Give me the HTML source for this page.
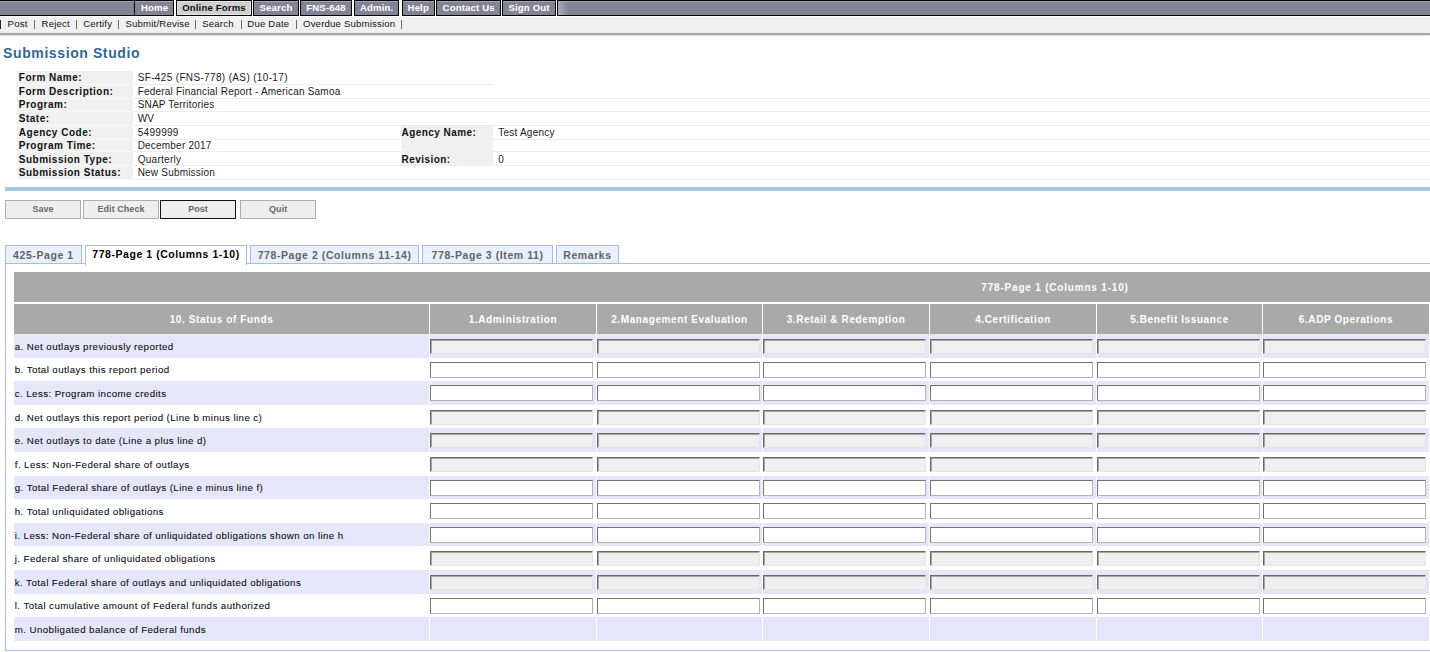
<!DOCTYPE html>
<html><head><meta charset="utf-8"><title>Submission Studio</title>
<style>
html,body{margin:0;padding:0;background:#fff;overflow:hidden;}
body{width:1430px;height:652px;position:relative;font-family:"Liberation Sans", sans-serif;}
#wrap{position:absolute;left:0;top:0;width:1430px;height:652px;overflow:hidden;}
.b{position:absolute;}
.t{position:absolute;white-space:nowrap;font-family:"Liberation Sans", sans-serif;}
.s{-webkit-text-stroke:0.07px currentColor;}
</style></head><body><div id="wrap">
<div class="b" style="left:0px;top:0px;width:1430px;height:16.5px;background:#fff;"></div>
<div class="b" style="left:0px;top:0px;width:134.8px;height:15.5px;background:#000;"></div>
<div class="b" style="left:0px;top:1px;width:133.8px;height:13.5px;background:#838396;box-shadow:inset 0 1px 0 #a7a4b6;"></div>
<div class="b" style="left:134.8px;top:0px;width:39.7px;height:15.5px;background:#000;"></div>
<div class="b" style="left:134.8px;top:1px;width:38.7px;height:13.5px;background:#838396;box-shadow:inset 0 1px 0 #a7a4b6;"></div>
<div class="t" style="left:124.80px;top:3.47px;width:59.70px;text-align:center;font-weight:bold;font-size:9.6px;line-height:9.6px;letter-spacing:0.15px;color:#fff;">Home</div>
<div class="b" style="left:176px;top:0px;width:76px;height:15.5px;background:#000;"></div>
<div class="b" style="left:177px;top:1px;width:74px;height:13.5px;background:#cfcfcf;box-shadow:inset 0 0 0 1px #e6e6e6;"></div>
<div class="t" style="left:166.00px;top:3.47px;width:96.00px;text-align:center;font-weight:bold;font-size:9.6px;line-height:9.6px;letter-spacing:0.15px;color:#111;">Online Forms</div>
<div class="b" style="left:253px;top:0px;width:46px;height:15.5px;background:#000;"></div>
<div class="b" style="left:254px;top:1px;width:44px;height:13.5px;background:#838396;box-shadow:inset 0 1px 0 #a7a4b6;"></div>
<div class="t" style="left:243.00px;top:3.47px;width:66.00px;text-align:center;font-weight:bold;font-size:9.6px;line-height:9.6px;letter-spacing:0.15px;color:#fff;">Search</div>
<div class="b" style="left:300px;top:0px;width:52px;height:15.5px;background:#000;"></div>
<div class="b" style="left:301px;top:1px;width:50px;height:13.5px;background:#838396;box-shadow:inset 0 1px 0 #a7a4b6;"></div>
<div class="t" style="left:290.00px;top:3.47px;width:72.00px;text-align:center;font-weight:bold;font-size:9.6px;line-height:9.6px;letter-spacing:0.15px;color:#fff;">FNS-648</div>
<div class="b" style="left:353.8px;top:0px;width:45.7px;height:15.5px;background:#000;"></div>
<div class="b" style="left:354.8px;top:1px;width:43.7px;height:13.5px;background:#838396;box-shadow:inset 0 1px 0 #a7a4b6;"></div>
<div class="t" style="left:343.80px;top:3.47px;width:65.70px;text-align:center;font-weight:bold;font-size:9.6px;line-height:9.6px;letter-spacing:0.15px;color:#fff;">Admin.</div>
<div class="b" style="left:401.5px;top:0px;width:33.5px;height:15.5px;background:#000;"></div>
<div class="b" style="left:402.5px;top:1px;width:31.5px;height:13.5px;background:#838396;box-shadow:inset 0 1px 0 #a7a4b6;"></div>
<div class="t" style="left:391.50px;top:3.47px;width:53.50px;text-align:center;font-weight:bold;font-size:9.6px;line-height:9.6px;letter-spacing:0.15px;color:#fff;">Help</div>
<div class="b" style="left:436.3px;top:0px;width:64.7px;height:15.5px;background:#000;"></div>
<div class="b" style="left:437.3px;top:1px;width:62.7px;height:13.5px;background:#838396;box-shadow:inset 0 1px 0 #a7a4b6;"></div>
<div class="t" style="left:426.30px;top:3.47px;width:84.70px;text-align:center;font-weight:bold;font-size:9.6px;line-height:9.6px;letter-spacing:0.15px;color:#fff;">Contact Us</div>
<div class="b" style="left:502.2px;top:0px;width:53.8px;height:15.5px;background:#000;"></div>
<div class="b" style="left:503.2px;top:1px;width:51.8px;height:13.5px;background:#838396;box-shadow:inset 0 1px 0 #a7a4b6;"></div>
<div class="t" style="left:492.20px;top:3.47px;width:73.80px;text-align:center;font-weight:bold;font-size:9.6px;line-height:9.6px;letter-spacing:0.15px;color:#fff;">Sign Out</div>
<div class="b" style="left:556.8px;top:0px;width:883.2px;height:15.5px;background:#000;"></div>
<div class="b" style="left:557.8px;top:1px;width:881.2px;height:13.5px;background:#838396;box-shadow:inset 0 1px 0 #a7a4b6;"></div>
<div class="b" style="left:557.8px;top:2px;width:11px;height:12.5px;background:linear-gradient(90deg,rgba(175,175,192,0.9),rgba(175,175,192,0));"></div>
<div class="b" style="left:0px;top:16.5px;width:1430px;height:16.5px;background:#f0f0f0;"></div>
<div class="b" style="left:0px;top:33px;width:1430px;height:2px;background:#a8a8a8;"></div>
<div class="b" style="left:0px;top:35px;width:1430px;height:1.5px;background:linear-gradient(#d8d8d8,#fff);"></div>
<div class="t" style="left:7.60px;top:19.17px;font-weight:normal;font-size:9.6px;line-height:9.6px;letter-spacing:0.18px;color:#111;">Post</div>
<div class="t" style="left:41.60px;top:19.17px;font-weight:normal;font-size:9.6px;line-height:9.6px;letter-spacing:0.18px;color:#111;">Reject</div>
<div class="t" style="left:83.20px;top:19.17px;font-weight:normal;font-size:9.6px;line-height:9.6px;letter-spacing:0.18px;color:#111;">Certify</div>
<div class="t" style="left:125.50px;top:19.17px;font-weight:normal;font-size:9.6px;line-height:9.6px;letter-spacing:0.18px;color:#111;">Submit/Revise</div>
<div class="t" style="left:202.20px;top:19.17px;font-weight:normal;font-size:9.6px;line-height:9.6px;letter-spacing:0.18px;color:#111;">Search</div>
<div class="t" style="left:247.30px;top:19.17px;font-weight:normal;font-size:9.6px;line-height:9.6px;letter-spacing:0.18px;color:#111;">Due Date</div>
<div class="t" style="left:303.00px;top:19.17px;font-weight:normal;font-size:9.6px;line-height:9.6px;letter-spacing:0.18px;color:#111;">Overdue Submission</div>
<div class="b" style="left:-0.3px;top:20px;width:1px;height:8.8px;background:#222;"></div>
<div class="b" style="left:33.6px;top:20px;width:1px;height:8.8px;background:#6a6a6a;"></div>
<div class="b" style="left:75.5px;top:20px;width:1px;height:8.8px;background:#6a6a6a;"></div>
<div class="b" style="left:118.2px;top:20px;width:1px;height:8.8px;background:#6a6a6a;"></div>
<div class="b" style="left:195.1px;top:20px;width:1px;height:8.8px;background:#6a6a6a;"></div>
<div class="b" style="left:240.5px;top:20px;width:1px;height:8.8px;background:#6a6a6a;"></div>
<div class="b" style="left:295.8px;top:20px;width:1px;height:8.8px;background:#6a6a6a;"></div>
<div class="b" style="left:400.5px;top:20px;width:1px;height:8.8px;background:#6a6a6a;"></div>
<div class="t" style="left:3.10px;top:46.15px;font-weight:bold;font-size:14px;line-height:14px;letter-spacing:0.6px;color:#336699;">Submission Studio</div>
<div class="b" style="left:17.3px;top:71.2px;width:115.7px;height:13.7px;background:#f0f0f0;"></div>
<div class="b" style="left:17.3px;top:83.9px;width:115.7px;height:1px;background:#f7f7f7;"></div>
<div class="b" style="left:134px;top:83.9px;width:360px;height:1px;background:#ebebeb;"></div>
<div class="t" style="left:18.80px;top:72.94px;font-weight:bold;font-size:10px;line-height:10px;letter-spacing:0.5px;color:#111;">Form Name:</div>
<div class="t" style="left:137.70px;top:72.94px;font-weight:normal;font-size:10px;line-height:10px;letter-spacing:0.35px;color:#1a1a1a;">SF-425 (FNS-778) (AS) (10-17)</div>
<div class="b" style="left:17.3px;top:84.9px;width:115.7px;height:14.1px;background:#f0f0f0;"></div>
<div class="b" style="left:17.3px;top:98px;width:115.7px;height:1px;background:#f7f7f7;"></div>
<div class="b" style="left:134px;top:98px;width:1300px;height:1px;background:#ebebeb;"></div>
<div class="t" style="left:18.80px;top:86.94px;font-weight:bold;font-size:10px;line-height:10px;letter-spacing:0.5px;color:#111;">Form Description:</div>
<div class="t" style="left:137.70px;top:86.94px;font-weight:normal;font-size:10px;line-height:10px;letter-spacing:0.2px;color:#1a1a1a;">Federal Financial Report - American Samoa</div>
<div class="b" style="left:17.3px;top:99px;width:115.7px;height:13.1px;background:#f0f0f0;"></div>
<div class="b" style="left:17.3px;top:111.1px;width:115.7px;height:1px;background:#f7f7f7;"></div>
<div class="b" style="left:134px;top:111.1px;width:1300px;height:1px;background:#ebebeb;"></div>
<div class="t" style="left:18.80px;top:100.33px;font-weight:bold;font-size:10px;line-height:10px;letter-spacing:0.5px;color:#111;">Program:</div>
<div class="t" style="left:137.70px;top:100.33px;font-weight:normal;font-size:10px;line-height:10px;letter-spacing:0.2px;color:#1a1a1a;">SNAP Territories</div>
<div class="b" style="left:17.3px;top:112.1px;width:115.7px;height:13.8px;background:#f0f0f0;"></div>
<div class="b" style="left:17.3px;top:124.9px;width:115.7px;height:1px;background:#f7f7f7;"></div>
<div class="b" style="left:134px;top:124.9px;width:1300px;height:1px;background:#ebebeb;"></div>
<div class="t" style="left:18.80px;top:113.83px;font-weight:bold;font-size:10px;line-height:10px;letter-spacing:0.5px;color:#111;">State:</div>
<div class="t" style="left:137.70px;top:113.83px;font-weight:normal;font-size:10px;line-height:10px;letter-spacing:0.2px;color:#1a1a1a;">WV</div>
<div class="b" style="left:17.3px;top:125.9px;width:115.7px;height:14px;background:#f0f0f0;"></div>
<div class="b" style="left:17.3px;top:138.9px;width:115.7px;height:1px;background:#f7f7f7;"></div>
<div class="b" style="left:134px;top:138.9px;width:1300px;height:1px;background:#ebebeb;"></div>
<div class="t" style="left:18.80px;top:127.94px;font-weight:bold;font-size:10px;line-height:10px;letter-spacing:0.5px;color:#111;">Agency Code:</div>
<div class="t" style="left:137.70px;top:127.94px;font-weight:normal;font-size:10px;line-height:10px;letter-spacing:0.3px;color:#1a1a1a;">5499999</div>
<div class="b" style="left:400.5px;top:125.9px;width:92.2px;height:14px;background:#f0f0f0;"></div>
<div class="t" style="left:401.50px;top:127.94px;font-weight:bold;font-size:10px;line-height:10px;letter-spacing:0.45px;color:#111;">Agency Name:</div>
<div class="t" style="left:498.30px;top:127.94px;font-weight:normal;font-size:10px;line-height:10px;letter-spacing:0.22px;color:#1a1a1a;">Test Agency</div>
<div class="b" style="left:17.3px;top:139.9px;width:115.7px;height:12.4px;background:#f0f0f0;"></div>
<div class="b" style="left:17.3px;top:151.3px;width:115.7px;height:1px;background:#f7f7f7;"></div>
<div class="b" style="left:134px;top:151.3px;width:1300px;height:1px;background:#ebebeb;"></div>
<div class="t" style="left:18.80px;top:141.23px;font-weight:bold;font-size:10px;line-height:10px;letter-spacing:0.5px;color:#111;">Program Time:</div>
<div class="t" style="left:137.70px;top:141.23px;font-weight:normal;font-size:10px;line-height:10px;letter-spacing:0.2px;color:#1a1a1a;">December 2017</div>
<div class="b" style="left:400.5px;top:139.9px;width:92.2px;height:12.4px;background:#f0f0f0;"></div>
<div class="b" style="left:17.3px;top:152.3px;width:115.7px;height:13.6px;background:#f0f0f0;"></div>
<div class="b" style="left:17.3px;top:164.9px;width:115.7px;height:1px;background:#f7f7f7;"></div>
<div class="b" style="left:134px;top:164.9px;width:1300px;height:1px;background:#ebebeb;"></div>
<div class="t" style="left:18.80px;top:154.94px;font-weight:bold;font-size:10px;line-height:10px;letter-spacing:0.5px;color:#111;">Submission Type:</div>
<div class="t" style="left:137.70px;top:154.94px;font-weight:normal;font-size:10px;line-height:10px;letter-spacing:0.28px;color:#1a1a1a;">Quarterly</div>
<div class="b" style="left:400.5px;top:152.3px;width:92.2px;height:13.6px;background:#f0f0f0;"></div>
<div class="t" style="left:401.50px;top:154.94px;font-weight:bold;font-size:10px;line-height:10px;letter-spacing:0.45px;color:#111;">Revision:</div>
<div class="t" style="left:498.30px;top:154.94px;font-weight:normal;font-size:10px;line-height:10px;letter-spacing:0.22px;color:#1a1a1a;">0</div>
<div class="b" style="left:17.3px;top:165.9px;width:115.7px;height:13.7px;background:#f0f0f0;"></div>
<div class="b" style="left:17.3px;top:178.6px;width:115.7px;height:1px;background:#f7f7f7;"></div>
<div class="b" style="left:134px;top:178.6px;width:1300px;height:1px;background:#ebebeb;"></div>
<div class="t" style="left:18.80px;top:168.44px;font-weight:bold;font-size:10px;line-height:10px;letter-spacing:0.5px;color:#111;">Submission Status:</div>
<div class="t" style="left:137.70px;top:168.44px;font-weight:normal;font-size:10px;line-height:10px;letter-spacing:0.2px;color:#1a1a1a;">New Submission</div>
<div class="b" style="left:5px;top:187px;width:1425px;height:4px;background:#a7c4e0;"></div>
<div class="b" style="left:5px;top:200.2px;width:76px;height:18.7px;background:#eeeeee;border:1px solid #adadad;box-sizing:border-box;"></div>
<div class="t" style="left:-17.00px;top:205.28px;width:120.00px;text-align:center;font-weight:bold;font-size:9px;line-height:9px;letter-spacing:0.05px;color:#666666;">Save</div>
<div class="b" style="left:83px;top:200.2px;width:76px;height:18.7px;background:#eeeeee;border:1px solid #adadad;box-sizing:border-box;"></div>
<div class="t" style="left:61.00px;top:205.28px;width:120.00px;text-align:center;font-weight:bold;font-size:9px;line-height:9px;letter-spacing:0.05px;color:#666666;">Edit Check</div>
<div class="b" style="left:160px;top:200.2px;width:76px;height:18.7px;background:#eeeeee;border:1px solid #111;box-sizing:border-box;"></div>
<div class="t" style="left:138.00px;top:205.28px;width:120.00px;text-align:center;font-weight:bold;font-size:9px;line-height:9px;letter-spacing:0.05px;color:#666666;">Post</div>
<div class="b" style="left:240px;top:200.2px;width:76.3px;height:18.7px;background:#eeeeee;border:1px solid #adadad;box-sizing:border-box;"></div>
<div class="t" style="left:218.15px;top:205.28px;width:120.00px;text-align:center;font-weight:bold;font-size:9px;line-height:9px;letter-spacing:0.05px;color:#666666;">Quit</div>
<div class="b" style="left:5px;top:263px;width:1440px;height:388px;border:1px solid #a3bde6;box-sizing:border-box;background:#fff;"></div>
<div class="b" style="left:5px;top:245.2px;width:76.8px;height:19px;background:#e9f0fc;border:1px solid #a3bde6;box-sizing:border-box;"></div>
<div class="t" style="left:-66.60px;top:250.01px;width:220.00px;text-align:center;font-weight:bold;font-size:10.5px;line-height:10.5px;letter-spacing:0.58px;color:#636363;">425-Page 1</div>
<div class="b" style="left:85px;top:245.2px;width:162px;height:19.5px;background:#fff;border:1px solid #a3bde6;border-bottom:none;box-sizing:border-box;"></div>
<div class="t" style="left:56.00px;top:249.41px;width:220.00px;text-align:center;font-weight:bold;font-size:10.5px;line-height:10.5px;letter-spacing:0.55px;color:#000;">778-Page 1 (Columns 1-10)</div>
<div class="b" style="left:250.3px;top:245.2px;width:168.7px;height:19px;background:#e9f0fc;border:1px solid #a3bde6;box-sizing:border-box;"></div>
<div class="t" style="left:224.65px;top:250.01px;width:220.00px;text-align:center;font-weight:bold;font-size:10.5px;line-height:10.5px;letter-spacing:0.58px;color:#636363;">778-Page 2 (Columns 11-14)</div>
<div class="b" style="left:422.2px;top:245.2px;width:130.8px;height:19px;background:#e9f0fc;border:1px solid #a3bde6;box-sizing:border-box;"></div>
<div class="t" style="left:377.60px;top:250.01px;width:220.00px;text-align:center;font-weight:bold;font-size:10.5px;line-height:10.5px;letter-spacing:0.58px;color:#636363;">778-Page 3 (Item 11)</div>
<div class="b" style="left:556px;top:245.2px;width:63px;height:19px;background:#e9f0fc;border:1px solid #a3bde6;box-sizing:border-box;"></div>
<div class="t" style="left:477.50px;top:250.01px;width:220.00px;text-align:center;font-weight:bold;font-size:10.5px;line-height:10.5px;letter-spacing:0.58px;color:#636363;">Remarks</div>
<div class="b" style="left:14px;top:272px;width:1420px;height:29.8px;background:#a9a9a9;"></div>
<div class="t" style="left:905.00px;top:282.94px;width:300.00px;text-align:center;font-weight:bold;font-size:10px;line-height:10px;letter-spacing:0.8px;color:#fff;">778-Page 1 (Columns 1-10)</div>
<div class="b" style="left:14px;top:304.2px;width:415px;height:29.6px;background:#a9a9a9;"></div>
<div class="b" style="left:430px;top:304.2px;width:166px;height:29.6px;background:#a9a9a9;"></div>
<div class="b" style="left:597px;top:304.2px;width:165px;height:29.6px;background:#a9a9a9;"></div>
<div class="b" style="left:763px;top:304.2px;width:166px;height:29.6px;background:#a9a9a9;"></div>
<div class="b" style="left:930px;top:304.2px;width:166px;height:29.6px;background:#a9a9a9;"></div>
<div class="b" style="left:1097px;top:304.2px;width:165px;height:29.6px;background:#a9a9a9;"></div>
<div class="b" style="left:1263px;top:304.2px;width:166px;height:29.6px;background:#a9a9a9;"></div>
<div class="b" style="left:1430px;top:304.2px;width:169px;height:29.6px;background:#a9a9a9;"></div>
<div class="t" style="left:71.50px;top:314.74px;width:300.00px;text-align:center;font-weight:bold;font-size:10px;line-height:10px;letter-spacing:0.6px;color:#fff;">10. Status of Funds</div>
<div class="t" style="left:363.00px;top:314.74px;width:300.00px;text-align:center;font-weight:bold;font-size:10px;line-height:10px;letter-spacing:0.6px;color:#fff;">1.Administration</div>
<div class="t" style="left:529.50px;top:314.74px;width:300.00px;text-align:center;font-weight:bold;font-size:10px;line-height:10px;letter-spacing:0.6px;color:#fff;">2.Management Evaluation</div>
<div class="t" style="left:696.00px;top:314.74px;width:300.00px;text-align:center;font-weight:bold;font-size:10px;line-height:10px;letter-spacing:0.6px;color:#fff;">3.Retail &amp; Redemption</div>
<div class="t" style="left:863.00px;top:314.74px;width:300.00px;text-align:center;font-weight:bold;font-size:10px;line-height:10px;letter-spacing:0.6px;color:#fff;">4.Certification</div>
<div class="t" style="left:1029.50px;top:314.74px;width:300.00px;text-align:center;font-weight:bold;font-size:10px;line-height:10px;letter-spacing:0.6px;color:#fff;">5.Benefit Issuance</div>
<div class="t" style="left:1196.00px;top:314.74px;width:300.00px;text-align:center;font-weight:bold;font-size:10px;line-height:10px;letter-spacing:0.6px;color:#fff;">6.ADP Operations</div>
<div class="b" style="left:14px;top:334px;width:415px;height:23.5px;background:#e6e6fa;"></div>
<div class="b" style="left:430px;top:334px;width:166px;height:23.5px;background:#e6e6fa;"></div>
<div class="b" style="left:597px;top:334px;width:165px;height:23.5px;background:#e6e6fa;"></div>
<div class="b" style="left:763px;top:334px;width:166px;height:23.5px;background:#e6e6fa;"></div>
<div class="b" style="left:930px;top:334px;width:166px;height:23.5px;background:#e6e6fa;"></div>
<div class="b" style="left:1097px;top:334px;width:165px;height:23.5px;background:#e6e6fa;"></div>
<div class="b" style="left:1263px;top:334px;width:166px;height:23.5px;background:#e6e6fa;"></div>
<div class="b" style="left:1430px;top:334px;width:169px;height:23.5px;background:#e6e6fa;"></div>
<div class="t s" style="left:14.80px;top:341.75px;font-weight:normal;font-size:9.75px;line-height:9.75px;letter-spacing:0.4px;color:#0a0a0a;">a. Net outlays previously reported</div>
<div class="b" style="left:430px;top:339px;width:163.3px;height:15px;background:#efefef;border-style:solid;border-width:1px;border-color:#6a6a6a #e4e4e4 #e4e4e4 #6a6a6a;box-shadow:inset 1px 1px 0 #a6a6a6;box-sizing:border-box;"></div>
<div class="b" style="left:597px;top:339px;width:163.3px;height:15px;background:#efefef;border-style:solid;border-width:1px;border-color:#6a6a6a #e4e4e4 #e4e4e4 #6a6a6a;box-shadow:inset 1px 1px 0 #a6a6a6;box-sizing:border-box;"></div>
<div class="b" style="left:763px;top:339px;width:163.3px;height:15px;background:#efefef;border-style:solid;border-width:1px;border-color:#6a6a6a #e4e4e4 #e4e4e4 #6a6a6a;box-shadow:inset 1px 1px 0 #a6a6a6;box-sizing:border-box;"></div>
<div class="b" style="left:930px;top:339px;width:163.3px;height:15px;background:#efefef;border-style:solid;border-width:1px;border-color:#6a6a6a #e4e4e4 #e4e4e4 #6a6a6a;box-shadow:inset 1px 1px 0 #a6a6a6;box-sizing:border-box;"></div>
<div class="b" style="left:1097px;top:339px;width:163.3px;height:15px;background:#efefef;border-style:solid;border-width:1px;border-color:#6a6a6a #e4e4e4 #e4e4e4 #6a6a6a;box-shadow:inset 1px 1px 0 #a6a6a6;box-sizing:border-box;"></div>
<div class="b" style="left:1263px;top:339px;width:163.3px;height:15px;background:#efefef;border-style:solid;border-width:1px;border-color:#6a6a6a #e4e4e4 #e4e4e4 #6a6a6a;box-shadow:inset 1px 1px 0 #a6a6a6;box-sizing:border-box;"></div>
<div class="b" style="left:1430px;top:339px;width:163.3px;height:15px;background:#efefef;border-style:solid;border-width:1px;border-color:#6a6a6a #e4e4e4 #e4e4e4 #6a6a6a;box-shadow:inset 1px 1px 0 #a6a6a6;box-sizing:border-box;"></div>
<div class="t s" style="left:14.80px;top:365.35px;font-weight:normal;font-size:9.75px;line-height:9.75px;letter-spacing:0.4px;color:#0a0a0a;">b. Total outlays this report period</div>
<div class="b" style="left:430px;top:361.8px;width:162.7px;height:16px;background:#fff;border-style:solid;border-width:1px;border-color:#737373 #b3b3b3 #b3b3b3 #737373;box-sizing:border-box;"></div>
<div class="b" style="left:597px;top:361.8px;width:162.7px;height:16px;background:#fff;border-style:solid;border-width:1px;border-color:#737373 #b3b3b3 #b3b3b3 #737373;box-sizing:border-box;"></div>
<div class="b" style="left:763px;top:361.8px;width:162.7px;height:16px;background:#fff;border-style:solid;border-width:1px;border-color:#737373 #b3b3b3 #b3b3b3 #737373;box-sizing:border-box;"></div>
<div class="b" style="left:930px;top:361.8px;width:162.7px;height:16px;background:#fff;border-style:solid;border-width:1px;border-color:#737373 #b3b3b3 #b3b3b3 #737373;box-sizing:border-box;"></div>
<div class="b" style="left:1097px;top:361.8px;width:162.7px;height:16px;background:#fff;border-style:solid;border-width:1px;border-color:#737373 #b3b3b3 #b3b3b3 #737373;box-sizing:border-box;"></div>
<div class="b" style="left:1263px;top:361.8px;width:162.7px;height:16px;background:#fff;border-style:solid;border-width:1px;border-color:#737373 #b3b3b3 #b3b3b3 #737373;box-sizing:border-box;"></div>
<div class="b" style="left:1430px;top:361.8px;width:162.7px;height:16px;background:#fff;border-style:solid;border-width:1px;border-color:#737373 #b3b3b3 #b3b3b3 #737373;box-sizing:border-box;"></div>
<div class="b" style="left:14px;top:381.2px;width:415px;height:23.5px;background:#e6e6fa;"></div>
<div class="b" style="left:430px;top:381.2px;width:166px;height:23.5px;background:#e6e6fa;"></div>
<div class="b" style="left:597px;top:381.2px;width:165px;height:23.5px;background:#e6e6fa;"></div>
<div class="b" style="left:763px;top:381.2px;width:166px;height:23.5px;background:#e6e6fa;"></div>
<div class="b" style="left:930px;top:381.2px;width:166px;height:23.5px;background:#e6e6fa;"></div>
<div class="b" style="left:1097px;top:381.2px;width:165px;height:23.5px;background:#e6e6fa;"></div>
<div class="b" style="left:1263px;top:381.2px;width:166px;height:23.5px;background:#e6e6fa;"></div>
<div class="b" style="left:1430px;top:381.2px;width:169px;height:23.5px;background:#e6e6fa;"></div>
<div class="t s" style="left:14.80px;top:388.95px;font-weight:normal;font-size:9.75px;line-height:9.75px;letter-spacing:0.4px;color:#0a0a0a;">c. Less: Program income credits</div>
<div class="b" style="left:430px;top:385.4px;width:162.7px;height:16px;background:#fff;border-style:solid;border-width:1px;border-color:#737373 #b3b3b3 #b3b3b3 #737373;box-sizing:border-box;"></div>
<div class="b" style="left:597px;top:385.4px;width:162.7px;height:16px;background:#fff;border-style:solid;border-width:1px;border-color:#737373 #b3b3b3 #b3b3b3 #737373;box-sizing:border-box;"></div>
<div class="b" style="left:763px;top:385.4px;width:162.7px;height:16px;background:#fff;border-style:solid;border-width:1px;border-color:#737373 #b3b3b3 #b3b3b3 #737373;box-sizing:border-box;"></div>
<div class="b" style="left:930px;top:385.4px;width:162.7px;height:16px;background:#fff;border-style:solid;border-width:1px;border-color:#737373 #b3b3b3 #b3b3b3 #737373;box-sizing:border-box;"></div>
<div class="b" style="left:1097px;top:385.4px;width:162.7px;height:16px;background:#fff;border-style:solid;border-width:1px;border-color:#737373 #b3b3b3 #b3b3b3 #737373;box-sizing:border-box;"></div>
<div class="b" style="left:1263px;top:385.4px;width:162.7px;height:16px;background:#fff;border-style:solid;border-width:1px;border-color:#737373 #b3b3b3 #b3b3b3 #737373;box-sizing:border-box;"></div>
<div class="b" style="left:1430px;top:385.4px;width:162.7px;height:16px;background:#fff;border-style:solid;border-width:1px;border-color:#737373 #b3b3b3 #b3b3b3 #737373;box-sizing:border-box;"></div>
<div class="t s" style="left:14.80px;top:412.55px;font-weight:normal;font-size:9.75px;line-height:9.75px;letter-spacing:0.4px;color:#0a0a0a;">d. Net outlays this report period (Line b minus line c)</div>
<div class="b" style="left:430px;top:409.8px;width:163.3px;height:15px;background:#efefef;border-style:solid;border-width:1px;border-color:#6a6a6a #e4e4e4 #e4e4e4 #6a6a6a;box-shadow:inset 1px 1px 0 #a6a6a6;box-sizing:border-box;"></div>
<div class="b" style="left:597px;top:409.8px;width:163.3px;height:15px;background:#efefef;border-style:solid;border-width:1px;border-color:#6a6a6a #e4e4e4 #e4e4e4 #6a6a6a;box-shadow:inset 1px 1px 0 #a6a6a6;box-sizing:border-box;"></div>
<div class="b" style="left:763px;top:409.8px;width:163.3px;height:15px;background:#efefef;border-style:solid;border-width:1px;border-color:#6a6a6a #e4e4e4 #e4e4e4 #6a6a6a;box-shadow:inset 1px 1px 0 #a6a6a6;box-sizing:border-box;"></div>
<div class="b" style="left:930px;top:409.8px;width:163.3px;height:15px;background:#efefef;border-style:solid;border-width:1px;border-color:#6a6a6a #e4e4e4 #e4e4e4 #6a6a6a;box-shadow:inset 1px 1px 0 #a6a6a6;box-sizing:border-box;"></div>
<div class="b" style="left:1097px;top:409.8px;width:163.3px;height:15px;background:#efefef;border-style:solid;border-width:1px;border-color:#6a6a6a #e4e4e4 #e4e4e4 #6a6a6a;box-shadow:inset 1px 1px 0 #a6a6a6;box-sizing:border-box;"></div>
<div class="b" style="left:1263px;top:409.8px;width:163.3px;height:15px;background:#efefef;border-style:solid;border-width:1px;border-color:#6a6a6a #e4e4e4 #e4e4e4 #6a6a6a;box-shadow:inset 1px 1px 0 #a6a6a6;box-sizing:border-box;"></div>
<div class="b" style="left:1430px;top:409.8px;width:163.3px;height:15px;background:#efefef;border-style:solid;border-width:1px;border-color:#6a6a6a #e4e4e4 #e4e4e4 #6a6a6a;box-shadow:inset 1px 1px 0 #a6a6a6;box-sizing:border-box;"></div>
<div class="b" style="left:14px;top:428.4px;width:415px;height:23.5px;background:#e6e6fa;"></div>
<div class="b" style="left:430px;top:428.4px;width:166px;height:23.5px;background:#e6e6fa;"></div>
<div class="b" style="left:597px;top:428.4px;width:165px;height:23.5px;background:#e6e6fa;"></div>
<div class="b" style="left:763px;top:428.4px;width:166px;height:23.5px;background:#e6e6fa;"></div>
<div class="b" style="left:930px;top:428.4px;width:166px;height:23.5px;background:#e6e6fa;"></div>
<div class="b" style="left:1097px;top:428.4px;width:165px;height:23.5px;background:#e6e6fa;"></div>
<div class="b" style="left:1263px;top:428.4px;width:166px;height:23.5px;background:#e6e6fa;"></div>
<div class="b" style="left:1430px;top:428.4px;width:169px;height:23.5px;background:#e6e6fa;"></div>
<div class="t s" style="left:14.80px;top:436.15px;font-weight:normal;font-size:9.75px;line-height:9.75px;letter-spacing:0.4px;color:#0a0a0a;">e. Net outlays to date (Line a plus line d)</div>
<div class="b" style="left:430px;top:433.4px;width:163.3px;height:15px;background:#efefef;border-style:solid;border-width:1px;border-color:#6a6a6a #e4e4e4 #e4e4e4 #6a6a6a;box-shadow:inset 1px 1px 0 #a6a6a6;box-sizing:border-box;"></div>
<div class="b" style="left:597px;top:433.4px;width:163.3px;height:15px;background:#efefef;border-style:solid;border-width:1px;border-color:#6a6a6a #e4e4e4 #e4e4e4 #6a6a6a;box-shadow:inset 1px 1px 0 #a6a6a6;box-sizing:border-box;"></div>
<div class="b" style="left:763px;top:433.4px;width:163.3px;height:15px;background:#efefef;border-style:solid;border-width:1px;border-color:#6a6a6a #e4e4e4 #e4e4e4 #6a6a6a;box-shadow:inset 1px 1px 0 #a6a6a6;box-sizing:border-box;"></div>
<div class="b" style="left:930px;top:433.4px;width:163.3px;height:15px;background:#efefef;border-style:solid;border-width:1px;border-color:#6a6a6a #e4e4e4 #e4e4e4 #6a6a6a;box-shadow:inset 1px 1px 0 #a6a6a6;box-sizing:border-box;"></div>
<div class="b" style="left:1097px;top:433.4px;width:163.3px;height:15px;background:#efefef;border-style:solid;border-width:1px;border-color:#6a6a6a #e4e4e4 #e4e4e4 #6a6a6a;box-shadow:inset 1px 1px 0 #a6a6a6;box-sizing:border-box;"></div>
<div class="b" style="left:1263px;top:433.4px;width:163.3px;height:15px;background:#efefef;border-style:solid;border-width:1px;border-color:#6a6a6a #e4e4e4 #e4e4e4 #6a6a6a;box-shadow:inset 1px 1px 0 #a6a6a6;box-sizing:border-box;"></div>
<div class="b" style="left:1430px;top:433.4px;width:163.3px;height:15px;background:#efefef;border-style:solid;border-width:1px;border-color:#6a6a6a #e4e4e4 #e4e4e4 #6a6a6a;box-shadow:inset 1px 1px 0 #a6a6a6;box-sizing:border-box;"></div>
<div class="t s" style="left:14.80px;top:459.75px;font-weight:normal;font-size:9.75px;line-height:9.75px;letter-spacing:0.4px;color:#0a0a0a;">f. Less: Non-Federal share of outlays</div>
<div class="b" style="left:430px;top:457px;width:163.3px;height:15px;background:#efefef;border-style:solid;border-width:1px;border-color:#6a6a6a #e4e4e4 #e4e4e4 #6a6a6a;box-shadow:inset 1px 1px 0 #a6a6a6;box-sizing:border-box;"></div>
<div class="b" style="left:597px;top:457px;width:163.3px;height:15px;background:#efefef;border-style:solid;border-width:1px;border-color:#6a6a6a #e4e4e4 #e4e4e4 #6a6a6a;box-shadow:inset 1px 1px 0 #a6a6a6;box-sizing:border-box;"></div>
<div class="b" style="left:763px;top:457px;width:163.3px;height:15px;background:#efefef;border-style:solid;border-width:1px;border-color:#6a6a6a #e4e4e4 #e4e4e4 #6a6a6a;box-shadow:inset 1px 1px 0 #a6a6a6;box-sizing:border-box;"></div>
<div class="b" style="left:930px;top:457px;width:163.3px;height:15px;background:#efefef;border-style:solid;border-width:1px;border-color:#6a6a6a #e4e4e4 #e4e4e4 #6a6a6a;box-shadow:inset 1px 1px 0 #a6a6a6;box-sizing:border-box;"></div>
<div class="b" style="left:1097px;top:457px;width:163.3px;height:15px;background:#efefef;border-style:solid;border-width:1px;border-color:#6a6a6a #e4e4e4 #e4e4e4 #6a6a6a;box-shadow:inset 1px 1px 0 #a6a6a6;box-sizing:border-box;"></div>
<div class="b" style="left:1263px;top:457px;width:163.3px;height:15px;background:#efefef;border-style:solid;border-width:1px;border-color:#6a6a6a #e4e4e4 #e4e4e4 #6a6a6a;box-shadow:inset 1px 1px 0 #a6a6a6;box-sizing:border-box;"></div>
<div class="b" style="left:1430px;top:457px;width:163.3px;height:15px;background:#efefef;border-style:solid;border-width:1px;border-color:#6a6a6a #e4e4e4 #e4e4e4 #6a6a6a;box-shadow:inset 1px 1px 0 #a6a6a6;box-sizing:border-box;"></div>
<div class="b" style="left:14px;top:475.6px;width:415px;height:23.5px;background:#e6e6fa;"></div>
<div class="b" style="left:430px;top:475.6px;width:166px;height:23.5px;background:#e6e6fa;"></div>
<div class="b" style="left:597px;top:475.6px;width:165px;height:23.5px;background:#e6e6fa;"></div>
<div class="b" style="left:763px;top:475.6px;width:166px;height:23.5px;background:#e6e6fa;"></div>
<div class="b" style="left:930px;top:475.6px;width:166px;height:23.5px;background:#e6e6fa;"></div>
<div class="b" style="left:1097px;top:475.6px;width:165px;height:23.5px;background:#e6e6fa;"></div>
<div class="b" style="left:1263px;top:475.6px;width:166px;height:23.5px;background:#e6e6fa;"></div>
<div class="b" style="left:1430px;top:475.6px;width:169px;height:23.5px;background:#e6e6fa;"></div>
<div class="t s" style="left:14.80px;top:483.35px;font-weight:normal;font-size:9.75px;line-height:9.75px;letter-spacing:0.4px;color:#0a0a0a;">g. Total Federal share of outlays (Line e minus line f)</div>
<div class="b" style="left:430px;top:479.8px;width:162.7px;height:16px;background:#fff;border-style:solid;border-width:1px;border-color:#737373 #b3b3b3 #b3b3b3 #737373;box-sizing:border-box;"></div>
<div class="b" style="left:597px;top:479.8px;width:162.7px;height:16px;background:#fff;border-style:solid;border-width:1px;border-color:#737373 #b3b3b3 #b3b3b3 #737373;box-sizing:border-box;"></div>
<div class="b" style="left:763px;top:479.8px;width:162.7px;height:16px;background:#fff;border-style:solid;border-width:1px;border-color:#737373 #b3b3b3 #b3b3b3 #737373;box-sizing:border-box;"></div>
<div class="b" style="left:930px;top:479.8px;width:162.7px;height:16px;background:#fff;border-style:solid;border-width:1px;border-color:#737373 #b3b3b3 #b3b3b3 #737373;box-sizing:border-box;"></div>
<div class="b" style="left:1097px;top:479.8px;width:162.7px;height:16px;background:#fff;border-style:solid;border-width:1px;border-color:#737373 #b3b3b3 #b3b3b3 #737373;box-sizing:border-box;"></div>
<div class="b" style="left:1263px;top:479.8px;width:162.7px;height:16px;background:#fff;border-style:solid;border-width:1px;border-color:#737373 #b3b3b3 #b3b3b3 #737373;box-sizing:border-box;"></div>
<div class="b" style="left:1430px;top:479.8px;width:162.7px;height:16px;background:#fff;border-style:solid;border-width:1px;border-color:#737373 #b3b3b3 #b3b3b3 #737373;box-sizing:border-box;"></div>
<div class="t s" style="left:14.80px;top:506.95px;font-weight:normal;font-size:9.75px;line-height:9.75px;letter-spacing:0.4px;color:#0a0a0a;">h. Total unliquidated obligations</div>
<div class="b" style="left:430px;top:503.4px;width:162.7px;height:16px;background:#fff;border-style:solid;border-width:1px;border-color:#737373 #b3b3b3 #b3b3b3 #737373;box-sizing:border-box;"></div>
<div class="b" style="left:597px;top:503.4px;width:162.7px;height:16px;background:#fff;border-style:solid;border-width:1px;border-color:#737373 #b3b3b3 #b3b3b3 #737373;box-sizing:border-box;"></div>
<div class="b" style="left:763px;top:503.4px;width:162.7px;height:16px;background:#fff;border-style:solid;border-width:1px;border-color:#737373 #b3b3b3 #b3b3b3 #737373;box-sizing:border-box;"></div>
<div class="b" style="left:930px;top:503.4px;width:162.7px;height:16px;background:#fff;border-style:solid;border-width:1px;border-color:#737373 #b3b3b3 #b3b3b3 #737373;box-sizing:border-box;"></div>
<div class="b" style="left:1097px;top:503.4px;width:162.7px;height:16px;background:#fff;border-style:solid;border-width:1px;border-color:#737373 #b3b3b3 #b3b3b3 #737373;box-sizing:border-box;"></div>
<div class="b" style="left:1263px;top:503.4px;width:162.7px;height:16px;background:#fff;border-style:solid;border-width:1px;border-color:#737373 #b3b3b3 #b3b3b3 #737373;box-sizing:border-box;"></div>
<div class="b" style="left:1430px;top:503.4px;width:162.7px;height:16px;background:#fff;border-style:solid;border-width:1px;border-color:#737373 #b3b3b3 #b3b3b3 #737373;box-sizing:border-box;"></div>
<div class="b" style="left:14px;top:522.8px;width:415px;height:23.5px;background:#e6e6fa;"></div>
<div class="b" style="left:430px;top:522.8px;width:166px;height:23.5px;background:#e6e6fa;"></div>
<div class="b" style="left:597px;top:522.8px;width:165px;height:23.5px;background:#e6e6fa;"></div>
<div class="b" style="left:763px;top:522.8px;width:166px;height:23.5px;background:#e6e6fa;"></div>
<div class="b" style="left:930px;top:522.8px;width:166px;height:23.5px;background:#e6e6fa;"></div>
<div class="b" style="left:1097px;top:522.8px;width:165px;height:23.5px;background:#e6e6fa;"></div>
<div class="b" style="left:1263px;top:522.8px;width:166px;height:23.5px;background:#e6e6fa;"></div>
<div class="b" style="left:1430px;top:522.8px;width:169px;height:23.5px;background:#e6e6fa;"></div>
<div class="t s" style="left:14.80px;top:530.55px;font-weight:normal;font-size:9.75px;line-height:9.75px;letter-spacing:0.4px;color:#0a0a0a;">i. Less: Non-Federal share of unliquidated obligations shown on line h</div>
<div class="b" style="left:430px;top:527px;width:162.7px;height:16px;background:#fff;border-style:solid;border-width:1px;border-color:#737373 #b3b3b3 #b3b3b3 #737373;box-sizing:border-box;"></div>
<div class="b" style="left:597px;top:527px;width:162.7px;height:16px;background:#fff;border-style:solid;border-width:1px;border-color:#737373 #b3b3b3 #b3b3b3 #737373;box-sizing:border-box;"></div>
<div class="b" style="left:763px;top:527px;width:162.7px;height:16px;background:#fff;border-style:solid;border-width:1px;border-color:#737373 #b3b3b3 #b3b3b3 #737373;box-sizing:border-box;"></div>
<div class="b" style="left:930px;top:527px;width:162.7px;height:16px;background:#fff;border-style:solid;border-width:1px;border-color:#737373 #b3b3b3 #b3b3b3 #737373;box-sizing:border-box;"></div>
<div class="b" style="left:1097px;top:527px;width:162.7px;height:16px;background:#fff;border-style:solid;border-width:1px;border-color:#737373 #b3b3b3 #b3b3b3 #737373;box-sizing:border-box;"></div>
<div class="b" style="left:1263px;top:527px;width:162.7px;height:16px;background:#fff;border-style:solid;border-width:1px;border-color:#737373 #b3b3b3 #b3b3b3 #737373;box-sizing:border-box;"></div>
<div class="b" style="left:1430px;top:527px;width:162.7px;height:16px;background:#fff;border-style:solid;border-width:1px;border-color:#737373 #b3b3b3 #b3b3b3 #737373;box-sizing:border-box;"></div>
<div class="t s" style="left:14.80px;top:554.15px;font-weight:normal;font-size:9.75px;line-height:9.75px;letter-spacing:0.4px;color:#0a0a0a;">j. Federal share of unliquidated obligations</div>
<div class="b" style="left:430px;top:551.4px;width:163.3px;height:15px;background:#efefef;border-style:solid;border-width:1px;border-color:#6a6a6a #e4e4e4 #e4e4e4 #6a6a6a;box-shadow:inset 1px 1px 0 #a6a6a6;box-sizing:border-box;"></div>
<div class="b" style="left:597px;top:551.4px;width:163.3px;height:15px;background:#efefef;border-style:solid;border-width:1px;border-color:#6a6a6a #e4e4e4 #e4e4e4 #6a6a6a;box-shadow:inset 1px 1px 0 #a6a6a6;box-sizing:border-box;"></div>
<div class="b" style="left:763px;top:551.4px;width:163.3px;height:15px;background:#efefef;border-style:solid;border-width:1px;border-color:#6a6a6a #e4e4e4 #e4e4e4 #6a6a6a;box-shadow:inset 1px 1px 0 #a6a6a6;box-sizing:border-box;"></div>
<div class="b" style="left:930px;top:551.4px;width:163.3px;height:15px;background:#efefef;border-style:solid;border-width:1px;border-color:#6a6a6a #e4e4e4 #e4e4e4 #6a6a6a;box-shadow:inset 1px 1px 0 #a6a6a6;box-sizing:border-box;"></div>
<div class="b" style="left:1097px;top:551.4px;width:163.3px;height:15px;background:#efefef;border-style:solid;border-width:1px;border-color:#6a6a6a #e4e4e4 #e4e4e4 #6a6a6a;box-shadow:inset 1px 1px 0 #a6a6a6;box-sizing:border-box;"></div>
<div class="b" style="left:1263px;top:551.4px;width:163.3px;height:15px;background:#efefef;border-style:solid;border-width:1px;border-color:#6a6a6a #e4e4e4 #e4e4e4 #6a6a6a;box-shadow:inset 1px 1px 0 #a6a6a6;box-sizing:border-box;"></div>
<div class="b" style="left:1430px;top:551.4px;width:163.3px;height:15px;background:#efefef;border-style:solid;border-width:1px;border-color:#6a6a6a #e4e4e4 #e4e4e4 #6a6a6a;box-shadow:inset 1px 1px 0 #a6a6a6;box-sizing:border-box;"></div>
<div class="b" style="left:14px;top:570px;width:415px;height:23.5px;background:#e6e6fa;"></div>
<div class="b" style="left:430px;top:570px;width:166px;height:23.5px;background:#e6e6fa;"></div>
<div class="b" style="left:597px;top:570px;width:165px;height:23.5px;background:#e6e6fa;"></div>
<div class="b" style="left:763px;top:570px;width:166px;height:23.5px;background:#e6e6fa;"></div>
<div class="b" style="left:930px;top:570px;width:166px;height:23.5px;background:#e6e6fa;"></div>
<div class="b" style="left:1097px;top:570px;width:165px;height:23.5px;background:#e6e6fa;"></div>
<div class="b" style="left:1263px;top:570px;width:166px;height:23.5px;background:#e6e6fa;"></div>
<div class="b" style="left:1430px;top:570px;width:169px;height:23.5px;background:#e6e6fa;"></div>
<div class="t s" style="left:14.80px;top:577.75px;font-weight:normal;font-size:9.75px;line-height:9.75px;letter-spacing:0.4px;color:#0a0a0a;">k. Total Federal share of outlays and unliquidated obligations</div>
<div class="b" style="left:430px;top:575px;width:163.3px;height:15px;background:#efefef;border-style:solid;border-width:1px;border-color:#6a6a6a #e4e4e4 #e4e4e4 #6a6a6a;box-shadow:inset 1px 1px 0 #a6a6a6;box-sizing:border-box;"></div>
<div class="b" style="left:597px;top:575px;width:163.3px;height:15px;background:#efefef;border-style:solid;border-width:1px;border-color:#6a6a6a #e4e4e4 #e4e4e4 #6a6a6a;box-shadow:inset 1px 1px 0 #a6a6a6;box-sizing:border-box;"></div>
<div class="b" style="left:763px;top:575px;width:163.3px;height:15px;background:#efefef;border-style:solid;border-width:1px;border-color:#6a6a6a #e4e4e4 #e4e4e4 #6a6a6a;box-shadow:inset 1px 1px 0 #a6a6a6;box-sizing:border-box;"></div>
<div class="b" style="left:930px;top:575px;width:163.3px;height:15px;background:#efefef;border-style:solid;border-width:1px;border-color:#6a6a6a #e4e4e4 #e4e4e4 #6a6a6a;box-shadow:inset 1px 1px 0 #a6a6a6;box-sizing:border-box;"></div>
<div class="b" style="left:1097px;top:575px;width:163.3px;height:15px;background:#efefef;border-style:solid;border-width:1px;border-color:#6a6a6a #e4e4e4 #e4e4e4 #6a6a6a;box-shadow:inset 1px 1px 0 #a6a6a6;box-sizing:border-box;"></div>
<div class="b" style="left:1263px;top:575px;width:163.3px;height:15px;background:#efefef;border-style:solid;border-width:1px;border-color:#6a6a6a #e4e4e4 #e4e4e4 #6a6a6a;box-shadow:inset 1px 1px 0 #a6a6a6;box-sizing:border-box;"></div>
<div class="b" style="left:1430px;top:575px;width:163.3px;height:15px;background:#efefef;border-style:solid;border-width:1px;border-color:#6a6a6a #e4e4e4 #e4e4e4 #6a6a6a;box-shadow:inset 1px 1px 0 #a6a6a6;box-sizing:border-box;"></div>
<div class="t s" style="left:14.80px;top:601.35px;font-weight:normal;font-size:9.75px;line-height:9.75px;letter-spacing:0.4px;color:#0a0a0a;">l. Total cumulative amount of Federal funds authorized</div>
<div class="b" style="left:430px;top:597.8px;width:162.7px;height:16px;background:#fff;border-style:solid;border-width:1px;border-color:#737373 #b3b3b3 #b3b3b3 #737373;box-sizing:border-box;"></div>
<div class="b" style="left:597px;top:597.8px;width:162.7px;height:16px;background:#fff;border-style:solid;border-width:1px;border-color:#737373 #b3b3b3 #b3b3b3 #737373;box-sizing:border-box;"></div>
<div class="b" style="left:763px;top:597.8px;width:162.7px;height:16px;background:#fff;border-style:solid;border-width:1px;border-color:#737373 #b3b3b3 #b3b3b3 #737373;box-sizing:border-box;"></div>
<div class="b" style="left:930px;top:597.8px;width:162.7px;height:16px;background:#fff;border-style:solid;border-width:1px;border-color:#737373 #b3b3b3 #b3b3b3 #737373;box-sizing:border-box;"></div>
<div class="b" style="left:1097px;top:597.8px;width:162.7px;height:16px;background:#fff;border-style:solid;border-width:1px;border-color:#737373 #b3b3b3 #b3b3b3 #737373;box-sizing:border-box;"></div>
<div class="b" style="left:1263px;top:597.8px;width:162.7px;height:16px;background:#fff;border-style:solid;border-width:1px;border-color:#737373 #b3b3b3 #b3b3b3 #737373;box-sizing:border-box;"></div>
<div class="b" style="left:1430px;top:597.8px;width:162.7px;height:16px;background:#fff;border-style:solid;border-width:1px;border-color:#737373 #b3b3b3 #b3b3b3 #737373;box-sizing:border-box;"></div>
<div class="b" style="left:14px;top:617.2px;width:415px;height:23.5px;background:#e6e6fa;"></div>
<div class="b" style="left:430px;top:617.2px;width:166px;height:23.5px;background:#e6e6fa;"></div>
<div class="b" style="left:597px;top:617.2px;width:165px;height:23.5px;background:#e6e6fa;"></div>
<div class="b" style="left:763px;top:617.2px;width:166px;height:23.5px;background:#e6e6fa;"></div>
<div class="b" style="left:930px;top:617.2px;width:166px;height:23.5px;background:#e6e6fa;"></div>
<div class="b" style="left:1097px;top:617.2px;width:165px;height:23.5px;background:#e6e6fa;"></div>
<div class="b" style="left:1263px;top:617.2px;width:166px;height:23.5px;background:#e6e6fa;"></div>
<div class="b" style="left:1430px;top:617.2px;width:169px;height:23.5px;background:#e6e6fa;"></div>
<div class="t s" style="left:14.80px;top:624.95px;font-weight:normal;font-size:9.75px;line-height:9.75px;letter-spacing:0.4px;color:#0a0a0a;">m. Unobligated balance of Federal funds</div>
</div></body></html>
